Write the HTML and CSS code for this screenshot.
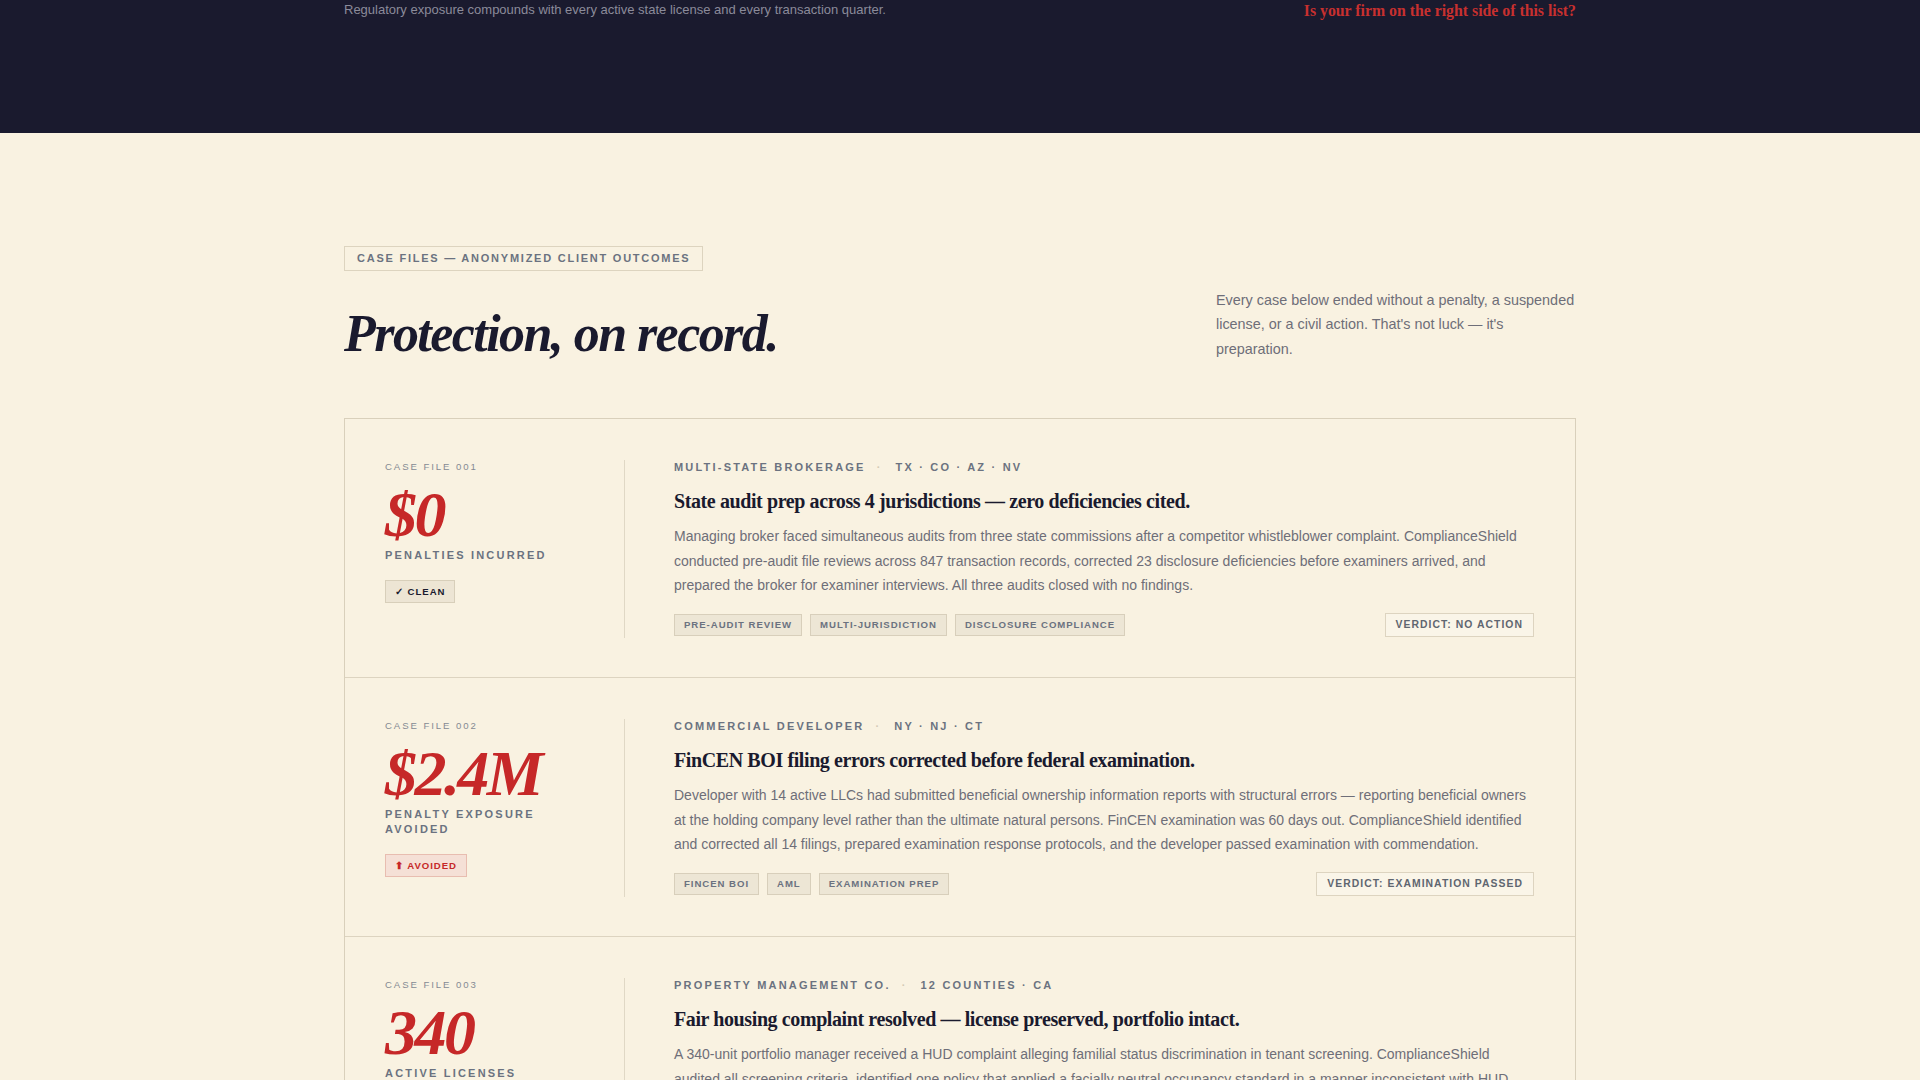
FILE: index.html
```html
<!DOCTYPE html>
<html lang="en">
<head>
<meta charset="utf-8">
<title>Case Files — ComplianceShield</title>
<link rel="stylesheet" href="styles.css">
</head>
<body>
<section class="band">
  <div class="container band-row">
    <p class="band-note">Regulatory exposure compounds with every active state license and every transaction quarter.</p>
    <p class="band-cta">Is your firm on the right side of this list?</p>
  </div>
</section>

<section class="cases">
  <div class="container">
    <header class="cases-head">
      <div class="cases-title">
        <span class="eyebrow">Case Files — Anonymized Client Outcomes</span>
        <h2 class="headline">Protection, on record.</h2>
      </div>
      <p class="cases-intro">Every case below ended without a penalty, a suspended license, or a civil action. That's not luck — it's preparation.</p>
    </header>

    <div class="case-list">
      <article class="case">
        <div class="case-stat">
          <div class="case-id">Case File 001</div>
          <div class="case-num">$0</div>
          <div class="case-label">Penalties Incurred</div>
          <span class="badge">✓ Clean</span>
        </div>
        <div class="case-body">
          <div class="case-meta">Multi-State Brokerage<span class="sep">·</span>TX · CO · AZ · NV</div>
          <h3 class="case-title">State audit prep across 4 jurisdictions — zero deficiencies cited.</h3>
          <p class="case-desc">Managing broker faced simultaneous audits from three state commissions after a competitor whistleblower complaint. ComplianceShield conducted pre-audit file reviews across 847 transaction records, corrected 23 disclosure deficiencies before examiners arrived, and prepared the broker for examiner interviews. All three audits closed with no findings.</p>
          <div class="case-foot">
            <div class="tags">
              <span class="tag">Pre-Audit Review</span>
              <span class="tag">Multi-Jurisdiction</span>
              <span class="tag">Disclosure Compliance</span>
            </div>
            <span class="verdict">Verdict: No Action</span>
          </div>
        </div>
      </article>

      <article class="case">
        <div class="case-stat">
          <div class="case-id">Case File 002</div>
          <div class="case-num">$2.4M</div>
          <div class="case-label">Penalty Exposure Avoided</div>
          <span class="badge badge-red">⬆ Avoided</span>
        </div>
        <div class="case-body">
          <div class="case-meta">Commercial Developer<span class="sep">·</span>NY · NJ · CT</div>
          <h3 class="case-title">FinCEN BOI filing errors corrected before federal examination.</h3>
          <p class="case-desc">Developer with 14 active LLCs had submitted beneficial ownership information reports with structural errors — reporting beneficial owners at the holding company level rather than the ultimate natural persons. FinCEN examination was 60 days out. ComplianceShield identified and corrected all 14 filings, prepared examination response protocols, and the developer passed examination with commendation.</p>
          <div class="case-foot">
            <div class="tags">
              <span class="tag">FinCEN BOI</span>
              <span class="tag">AML</span>
              <span class="tag">Examination Prep</span>
            </div>
            <span class="verdict">Verdict: Examination Passed</span>
          </div>
        </div>
      </article>

      <article class="case">
        <div class="case-stat">
          <div class="case-id">Case File 003</div>
          <div class="case-num">340</div>
          <div class="case-label">Active Licenses Protected</div>
          <span class="badge">✓ Preserved</span>
        </div>
        <div class="case-body">
          <div class="case-meta">Property Management Co.<span class="sep">·</span>12 Counties · CA</div>
          <h3 class="case-title">Fair housing complaint resolved — license preserved, portfolio intact.</h3>
          <p class="case-desc">A 340-unit portfolio manager received a HUD complaint alleging familial status discrimination in tenant screening. ComplianceShield audited all screening criteria, identified one policy that applied a facially neutral occupancy standard in a manner inconsistent with HUD guidance, rewrote the policy, and documented remediation before the investigator's first request.</p>
          <div class="case-foot">
            <div class="tags">
              <span class="tag">Fair Housing</span>
              <span class="tag">HUD Response</span>
              <span class="tag">Policy Remediation</span>
            </div>
            <span class="verdict">Verdict: Complaint Dismissed</span>
          </div>
        </div>
      </article>
    </div>
  </div>
</section>
</body>
</html>
```

FILE: styles.css
```css
* { box-sizing: border-box; }

html, body {
  margin: 0;
  padding: 0;
}

body {
  background: #f9f2e1;
  font-family: "Liberation Sans", Arial, sans-serif;
  color: #1a1a2e;
}

.container {
  width: 1232px;
  margin: 0 auto;
}

/* dark band (tail of previous section) */
.band {
  background: #1a1a2e;
  height: 133px;
}

.band-row {
  display: flex;
  justify-content: space-between;
  align-items: flex-start;
  padding-top: 2px;
}

.band-note {
  margin: 0;
  font-size: 13px;
  line-height: 16px;
  color: #8b8b9a;
}

.band-cta {
  margin: 1px 0 0;
  font-family: "Liberation Serif", "Times New Roman", serif;
  font-weight: 700;
  font-size: 15.8px;
  line-height: 16px;
  color: #c8302f;
}

/* cases section */
.cases {
  padding: 113px 0 80px;
}

.cases-head {
  display: flex;
  justify-content: space-between;
  align-items: flex-end;
  margin-bottom: 56px;
}

.eyebrow {
  display: inline-block;
  border: 1px solid #ddd4bf;
  padding: 0 12px;
  height: 25px;
  line-height: 23px;
  font-size: 11px;
  font-weight: 700;
  letter-spacing: 0.16em;
  text-transform: uppercase;
  color: #6b7280;
}

.headline {
  margin: 34px 0 0;
  font-family: "Liberation Serif", "Times New Roman", serif;
  font-style: italic;
  font-weight: 700;
  font-size: 52px;
  line-height: 1.1;
  letter-spacing: -0.03em;
  color: #1a1a2e;
}

.cases-intro {
  margin: 0 0 1px;
  width: 360px;
  font-size: 14.4px;
  line-height: 1.7;
  color: #6e6e78;
}

.case-list {
  border: 1px solid #d9d0bb;
}

.case {
  display: flex;
  height: 259px;
  padding: 41px 41px 0 40px;
  border-top: 1px solid #ddd4c0;
}

.case:first-child {
  border-top: 0;
  height: 258px;
}

.case-stat {
  flex: 0 0 240px;
  align-self: flex-start;
  height: 178px;
  padding-right: 40px;
  border-right: 1px solid #e0d8c5;
}

.case-id {
  font-size: 9.6px;
  line-height: 14px;
  letter-spacing: 0.2em;
  text-transform: uppercase;
  color: #858a93;
}

.case-num {
  margin-top: 9px;
  font-family: "Liberation Serif", "Times New Roman", serif;
  font-style: italic;
  font-weight: 700;
  font-size: 64px;
  line-height: 1;
  letter-spacing: -0.04em;
  color: #c62828;
}

.case-label {
  margin-top: 1px;
  font-size: 11px;
  font-weight: 700;
  line-height: 1.35;
  letter-spacing: 0.2em;
  text-transform: uppercase;
  color: #6b7280;
}

.badge {
  display: inline-block;
  margin-top: 17px;
  height: 23px;
  line-height: 21px;
  padding: 0 9px;
  background: #ede5d4;
  border: 1px solid #d8cfba;
  font-size: 9.6px;
  font-weight: 700;
  letter-spacing: 0.1em;
  text-transform: uppercase;
  color: #1a1a2e;
}

.badge-red {
  background: #f5e0d6;
  border-color: #e8bdb0;
  color: #c62828;
}

.case-body {
  flex: 1;
  margin-left: 49px;
}

.case-meta {
  font-size: 11px;
  font-weight: 700;
  line-height: 14px;
  letter-spacing: 0.2em;
  text-transform: uppercase;
  color: #6b7280;
}

.case-meta .sep {
  margin: 0 13px 0 11px;
  color: #d3cab6;
}

.case-title {
  margin: 14px 0 0;
  font-family: "Liberation Serif", "Times New Roman", serif;
  font-weight: 700;
  font-size: 20px;
  line-height: 26px;
  letter-spacing: -0.02em;
  color: #1a1a2e;
}

.case-desc {
  margin: 10px 0 0;
  font-size: 14px;
  line-height: 24.5px;
  color: #6e6e78;
}

.case-foot {
  margin-top: 15px;
  display: flex;
  justify-content: space-between;
  align-items: center;
}

.tags {
  display: flex;
  gap: 8px;
}

.tag {
  height: 22px;
  line-height: 20px;
  padding: 0 9px;
  background: #ede6d5;
  border: 1px solid #d8cfbb;
  font-size: 9.6px;
  font-weight: 700;
  letter-spacing: 0.1em;
  text-transform: uppercase;
  color: #6b7280;
}

.verdict {
  height: 24px;
  line-height: 22px;
  padding: 0 10px;
  border: 1px solid #ddd4c0;
  background: #faf5e8;
  font-size: 10.4px;
  font-weight: 700;
  letter-spacing: 0.1em;
  text-transform: uppercase;
  color: #5f6670;
}
```
